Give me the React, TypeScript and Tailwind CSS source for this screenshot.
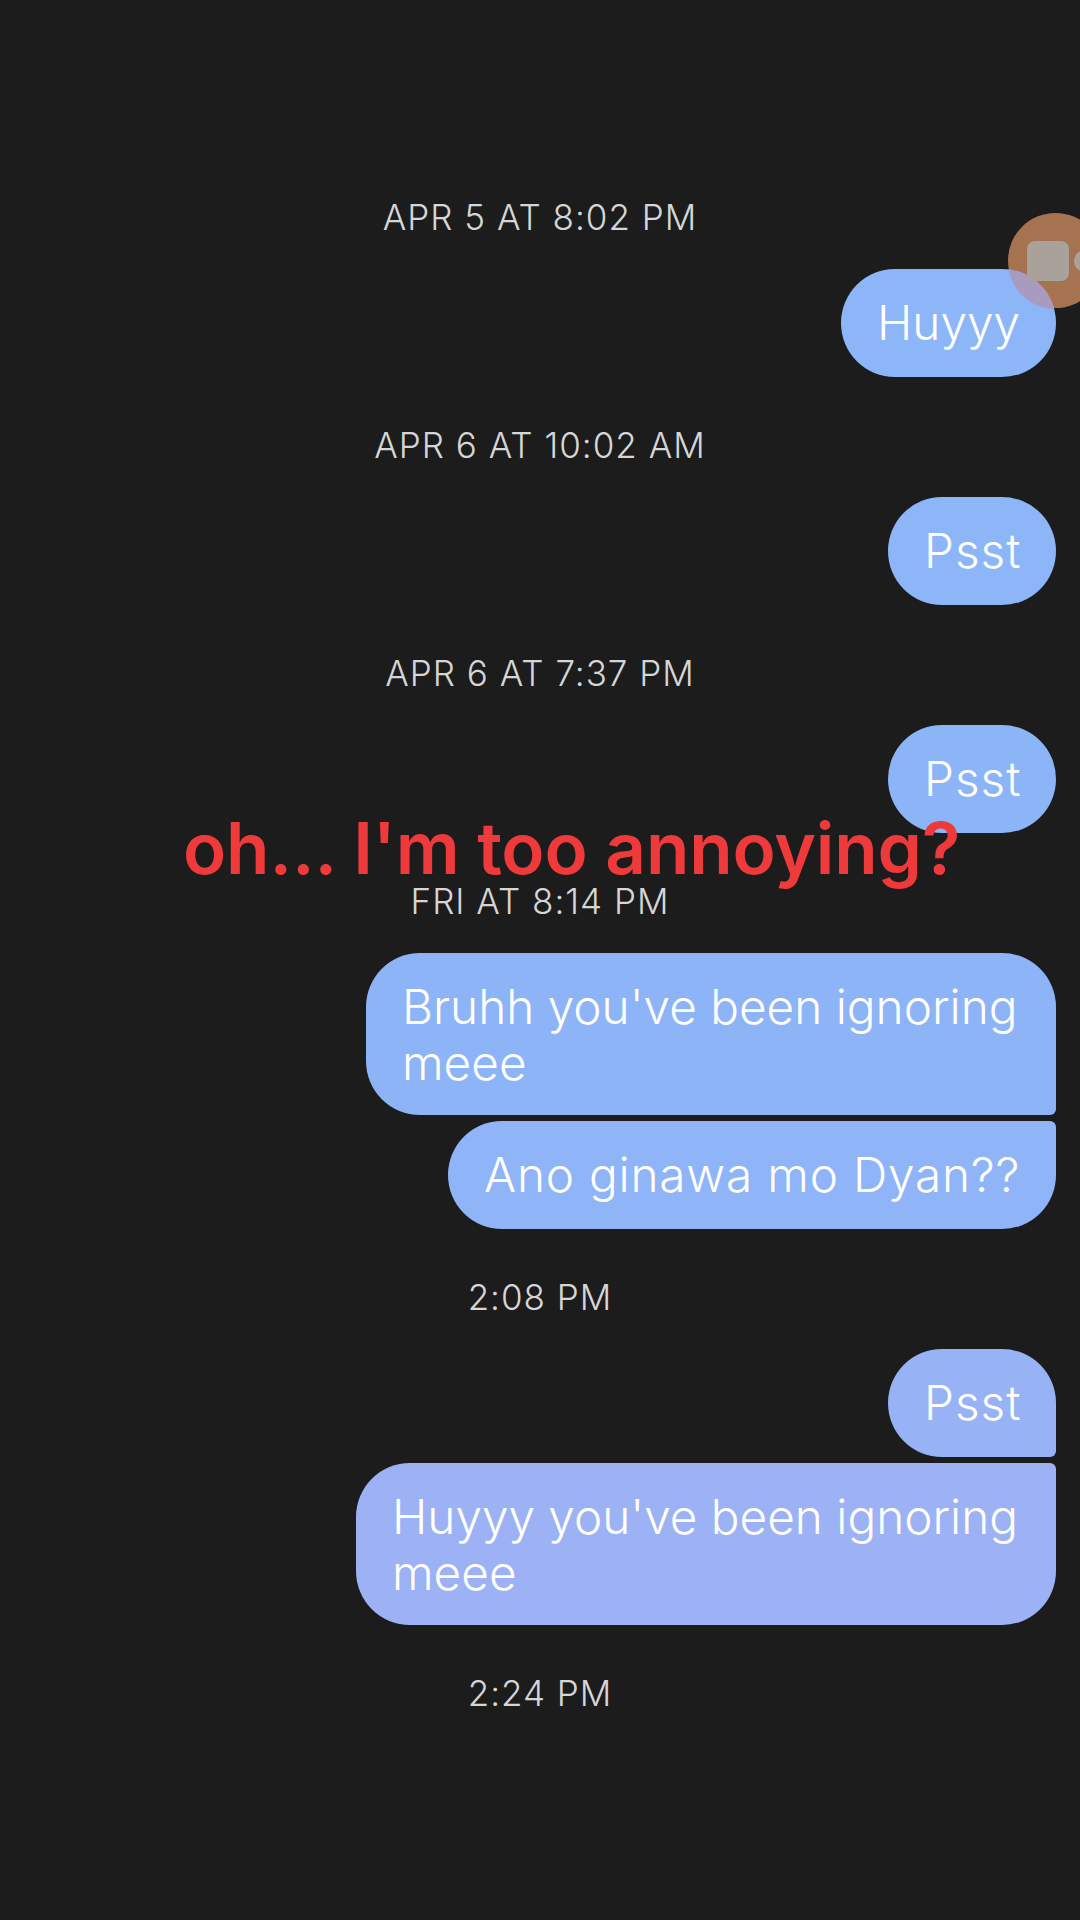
import React from 'react'

const font = 'font-[Inter,"Noto_Sans",sans-serif]'

function Stamp({ children }: { children: React.ReactNode }) {
  return (
    <div className={`${font} mt-10 mb-6 flex h-14 items-center justify-center text-[35px] font-light tracking-[1px] text-[#d6d6d6]`}>
      {children}
    </div>
  )
}

function Bubble({ children, className = '' }: { children: React.ReactNode; className?: string }) {
  return (
    <div className={`${font} relative z-10 mr-6 self-end overflow-hidden rounded-l-[54px] px-9 pt-[26px] text-[47.7px] leading-[56px] font-light text-white ${className}`}>
      {children}
    </div>
  )
}

export default function App() {
  return (
    <div className="relative h-[1920px] w-[1080px] overflow-hidden bg-[#1c1c1d]">
      <div className="flex flex-col pt-[149px]">
        <Stamp>APR 5 AT 8:02 PM</Stamp>
        <Bubble className="w-[215px] rounded-r-[54px] bg-[#8cb6f8] pb-[26px]">
          Huyyy
          <div className="absolute top-[-55px] right-[-47px] h-[95px] w-[95px] rounded-full bg-[#a99ac0]" />
        </Bubble>

        <Stamp>APR 6 AT 10:02 AM</Stamp>
        <Bubble className="w-[168px] rounded-r-[54px] bg-[#8cb6f8] pb-[26px] tracking-[1px]">Psst</Bubble>

        <Stamp>APR 6 AT 7:37 PM</Stamp>
        <Bubble className="w-[168px] rounded-r-[54px] bg-[#8cb5f8] pb-[26px] tracking-[1px]">Psst</Bubble>

        <Stamp>FRI AT 8:14 PM</Stamp>
        <Bubble className="w-[690px] rounded-tr-[54px] rounded-br-md bg-[#8db4f7] pb-6">Bruhh you've been ignoring meee</Bubble>
        <Bubble className="mt-1.5 w-[608px] rounded-tr-md rounded-br-[54px] bg-[#8fb4f7] pb-[26px] tracking-[0.8px] whitespace-nowrap">Ano ginawa mo Dyan??</Bubble>

        <Stamp>2:08 PM</Stamp>
        <Bubble className="w-[168px] rounded-tr-[54px] rounded-br-md bg-[#97b3f5] pb-[26px] tracking-[1px]">Psst</Bubble>
        <Bubble className="mt-1.5 w-[700px] rounded-tr-md rounded-br-[54px] bg-[#9cb2f4] pb-6">Huyyy you've been ignoring meee</Bubble>

        <Stamp>2:24 PM</Stamp>
      </div>

      {/* floating call bubble, clipped by the screen edge */}
      <div className="absolute top-[213px] left-[1008px] h-[95px] w-[95px] rounded-full bg-[#a5734f]" />
      <div className="absolute top-[241px] left-[1027px] z-20 h-[40px] w-[42px] rounded-lg bg-[#a8a29a]" />
      <div className="absolute top-[250px] left-[1074px] z-20 h-[22px] w-[22px] rounded-full bg-[#a8a29a]" />

      <div className={`${font} absolute top-[800px] left-[183px] z-30 text-[71px] leading-[96px] font-semibold tracking-[-0.15px] whitespace-nowrap text-[#ef3a3c]`}>
        oh... I'm too annoying?
      </div>
    </div>
  )
}
